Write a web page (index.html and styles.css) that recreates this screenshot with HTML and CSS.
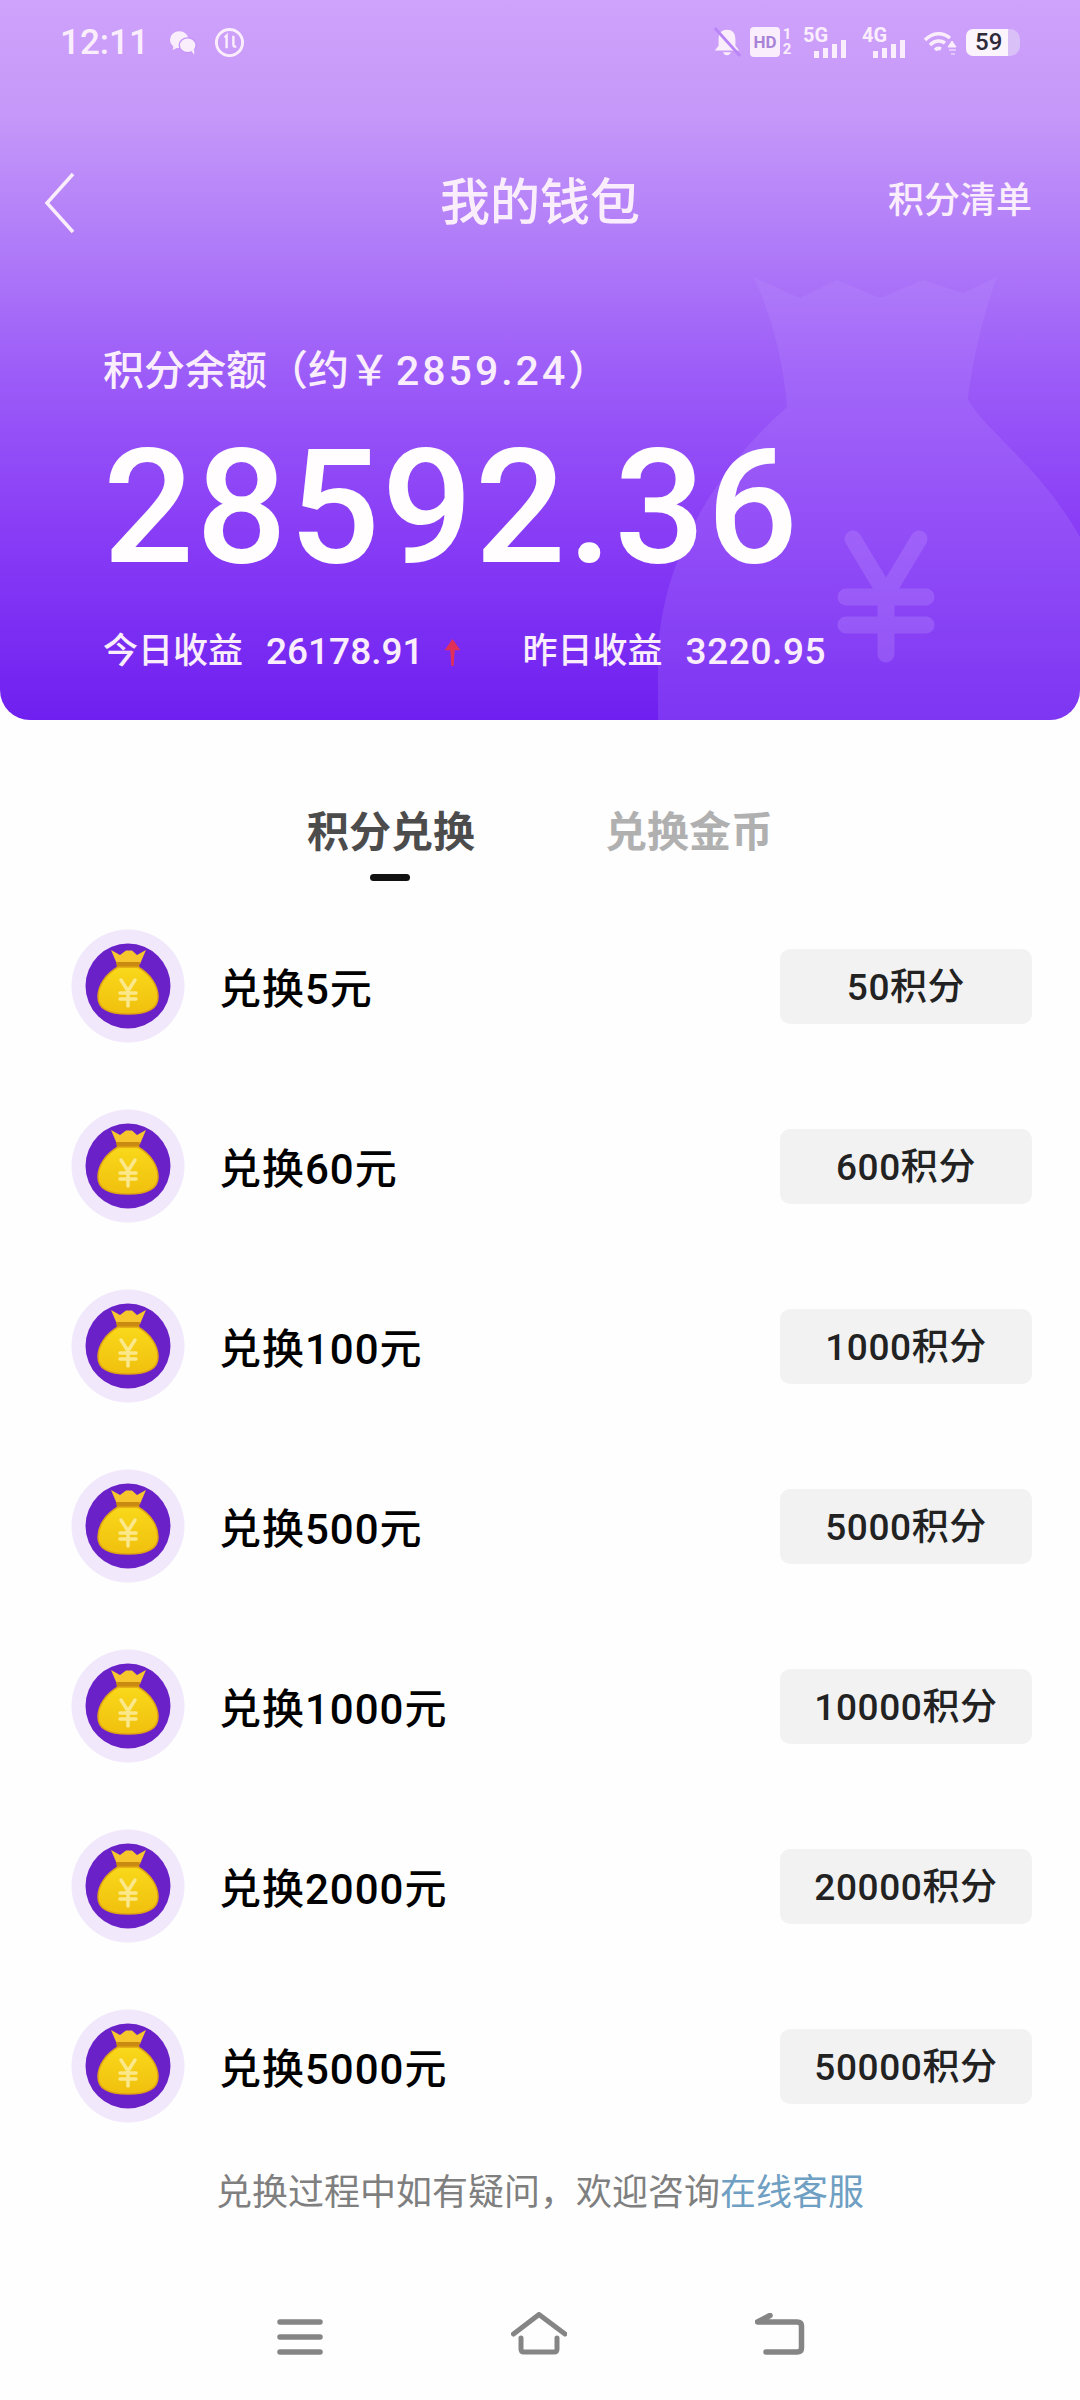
FILE: index.html
```html
<!DOCTYPE html>
<html lang="zh-CN">
<head>
<meta charset="utf-8">
<title>我的钱包</title>
<link rel="stylesheet" href="styles.css">
</head>
<body>
<svg class="defs" width="0" height="0">
  <defs>
    <linearGradient id="goldFill" x1="0" y1="0" x2="0" y2="1">
      <stop offset="0" stop-color="#f9d81a"/>
      <stop offset="1" stop-color="#f0c00e"/>
    </linearGradient>
    <symbol id="coinBag" viewBox="0 0 116 116">
      <circle cx="58" cy="58" r="56.5" fill="#f1e8fb"/>
      <circle cx="58" cy="58" r="42.5" fill="#6a22c8"/>
      <path d="M41 22 L50 27 L56 22.500 L62 22.500 L67 27 L76 22 L70 36 L47 36 Z" fill="#f7c52c"/>
      <path d="M46 34 H70 L69 40 H47 Z" fill="#c98a12"/>
      <path d="M48 39 H68 C80 46 88 57 88 69 C88 81 78 86 58 86 C38 86 28 81 28 69 C28 57 36 46 48 39 Z" fill="url(#goldFill)" stroke="#dfa214" stroke-width="1.500"/>
      <path d="M51 52 L58 63 L65 52 M50 65 H66 M50 71 H66 M58 63 V78" fill="none" stroke="#fbe88a" stroke-width="3.500" stroke-linecap="round"/>
    </symbol>
  </defs>
</svg>
<main class="page">
  <header class="hero">
    <svg class="watermark" viewBox="0 0 428 458" width="428" height="458" aria-hidden="true">
      <path d="M6 458 L6 390 C10 310 50 220 135 145 C133 110 120 50 101 15 L148 36 L185 18 L228 36 L271 18 L311 31 L345 15 C332 50 320 100 316 138 C340 175 388 205 428 275 L428 458 Z" fill="#c49bff" fill-opacity=".18"/>
      <path d="M201 277 L234 332 L267 277 M194 335 H274 M194 363 H274 M234 332 V392" fill="none" stroke="#c9a3ff" stroke-opacity=".24" stroke-width="17" stroke-linecap="round" stroke-linejoin="round"/>
    </svg>

    <div class="status">
      <div class="status-left">
        <span class="clock">12:11</span>
        <svg class="st-wechat" viewBox="0 0 30 26" width="28" height="25"><ellipse cx="11" cy="10" rx="10" ry="9" fill="#fbeefc"/><path d="M5 16 L4 21 L10 18 Z" fill="#fbeefc"/><ellipse cx="20" cy="16" rx="9" ry="8" fill="#fbeefc" stroke="#c596f8" stroke-width="1.500"/><path d="M24 22 L27 26 L27 20 Z" fill="#fbeefc"/></svg>
        <svg class="st-coin" viewBox="0 0 32 32" width="31" height="31"><circle cx="16" cy="16" r="13.500" fill="none" stroke="#fbeefc" stroke-width="3"/><path d="M11 11 L13 9 V22 M20 9 V18 Q20 21 23 20" fill="none" stroke="#fbeefc" stroke-width="2.500"/></svg>
      </div>
      <div class="status-right">
        <svg class="st-bell" viewBox="0 0 30 32" width="30" height="30"><path d="M15 3 C8 3 6 8 6 14 V20 L2 25 H28 L24 20 V14 C24 8 22 3 15 3 Z M11 27 H19 C19 31 11 31 11 27 Z" fill="#fbeefc"/><path d="M2 1 L29 31" stroke="#b985f7" stroke-width="3"/></svg>
        <span class="hd">HD</span>
        <span class="sim"><span>1</span><span>2</span></span>
        <span class="signal">
          <span class="net">5G</span>
          <svg class="bars" viewBox="0 0 36 18" width="36" height="18"><rect x="1" y="11" width="5" height="7" fill="#fbeefc"/><rect x="10" y="8" width="5" height="10" fill="#fbeefc"/><rect x="19" y="4" width="5" height="14" fill="#fbeefc"/><rect x="28" y="0" width="5" height="18" fill="#fbeefc"/></svg>
        </span>
        <span class="signal">
          <span class="net">4G</span>
          <svg class="bars" viewBox="0 0 36 18" width="36" height="18"><rect x="1" y="11" width="5" height="7" fill="#fbeefc"/><rect x="10" y="8" width="5" height="10" fill="#fbeefc"/><rect x="19" y="4" width="5" height="14" fill="#fbeefc"/><rect x="28" y="0" width="5" height="18" fill="#fbeefc"/></svg>
        </span>
        <svg class="st-wifi" viewBox="0 0 34 24" width="36" height="24"><path d="M2 9 C10 1 20 1 27 7 M7 14 C12 9 18 9 22 12 M12 19 C14 17 16 17 18 18" fill="none" stroke="#fbeefc" stroke-width="3.500"/><path d="M29 10 L33 16 H25 Z M26 19 H33 M28 23 H32" fill="#fbeefc" stroke="#fbeefc"/></svg>
        <span class="battery">59</span>
      </div>
    </div>

    <nav class="topbar">
      <svg class="back" viewBox="0 0 32 62" width="32" height="62"><path d="M29 2 L3 31 L29 60" fill="none" stroke="#fbeefc" stroke-width="3.500"/></svg>
      <h1 class="title">我的钱包</h1>
      <span class="topbar-link">积分清单</span>
    </nav>

    <section class="balance">
      <p class="balance-label">积分余额（约￥<span class="balance-approx">2859.24</span>）</p>
      <p class="balance-value">28592.36</p>
      <div class="earnings">
        <span class="earn-item">今日收益<b class="earn-num">26178.91</b><svg class="up" viewBox="0 0 14 24" width="17" height="27"><path d="M7 0 L14 10 H9 L8 24 H6 L5 10 H0 Z" fill="#e0305a"/></svg></span>
        <span class="earn-item">昨日收益<b class="earn-num earn-num-wide">3220.95</b></span>
      </div>
    </section>
  </header>

  <div class="tabs">
    <div class="tab tab-active">积分兑换</div>
    <div class="tab">兑换金币</div>
  </div>

  <ul class="list">
    <li class="row"><svg class="coin" width="116" height="116"><use href="#coinBag"/></svg><span class="row-label">兑换5元</span><span class="row-btn">50积分</span></li>
    <li class="row"><svg class="coin" width="116" height="116"><use href="#coinBag"/></svg><span class="row-label">兑换60元</span><span class="row-btn">600积分</span></li>
    <li class="row"><svg class="coin" width="116" height="116"><use href="#coinBag"/></svg><span class="row-label">兑换100元</span><span class="row-btn">1000积分</span></li>
    <li class="row"><svg class="coin" width="116" height="116"><use href="#coinBag"/></svg><span class="row-label">兑换500元</span><span class="row-btn">5000积分</span></li>
    <li class="row"><svg class="coin" width="116" height="116"><use href="#coinBag"/></svg><span class="row-label">兑换1000元</span><span class="row-btn">10000积分</span></li>
    <li class="row"><svg class="coin" width="116" height="116"><use href="#coinBag"/></svg><span class="row-label">兑换2000元</span><span class="row-btn">20000积分</span></li>
    <li class="row"><svg class="coin" width="116" height="116"><use href="#coinBag"/></svg><span class="row-label">兑换5000元</span><span class="row-btn">50000积分</span></li>
  </ul>

  <p class="help">兑换过程中如有疑问，欢迎咨询<a class="help-link">在线客服</a></p>

  <footer class="navbar">
    <svg viewBox="0 0 46 36" width="46" height="36"><path d="M3 3 H43 M3 18 H43 M3 33 H43" fill="none" stroke="#858585" stroke-width="5.500" stroke-linecap="round"/></svg>
    <svg viewBox="0 0 56 43" width="56" height="43"><path d="M2.500 22 L28 2.500 L54 22 M10 26 V37 Q10 40 13 40 H43 Q46 40 46 37 V26" fill="none" stroke="#858585" stroke-width="5" stroke-linecap="round" stroke-linejoin="round"/></svg>
    <svg viewBox="0 0 50 42" width="50" height="42"><path d="M15 2.500 L2.500 9 H42 Q46.500 9 46.500 13 V35 Q46.500 39 42 39 H11" fill="none" stroke="#858585" stroke-width="5.500" stroke-linecap="round" stroke-linejoin="round"/></svg>
  </footer>
</main>
</body>
</html>
```
FILE: styles.css
```css
* { box-sizing: border-box; }
html, body { margin: 0; padding: 0; }
body {
  background: #fefefe;
  color: #111;
  font-family: "Roboto", "Noto Sans CJK SC", sans-serif;
}
.defs { position: absolute; }
.page { width: 1080px; height: 2400px; overflow: hidden; }

.hero {
  position: relative;
  height: 720px;
  overflow: hidden;
  border-radius: 0 0 30px 30px;
  background: linear-gradient(180deg, #cfa2fb 0%, #c598f9 16%, #ae78f8 36%, #9c5cf8 52%, #8a3ff6 72%, #6f20f0 100%);
  color: #fbeefc;
}
.watermark { position: absolute; left: 652px; top: 262px; }

.status {
  position: relative;
  display: flex;
  justify-content: space-between;
  align-items: center;
  height: 82px;
  padding: 2px 60px 0 60px;
}
.status-left, .status-right { display: flex; align-items: center; }
.clock { font-size: 35px; font-weight: 500; margin-right: 20px; }
.st-coin { margin-left: 17px; }
.st-bell { margin-right: 8px; }
.hd {
  width: 30px; height: 30px;
  border-radius: 4px;
  background: #fbeefc;
  color: #a883d8;
  font-size: 17px; font-weight: 700;
  line-height: 30px;
  text-align: center;
}
.sim {
  display: flex; flex-direction: column;
  width: 12px; margin: 0 10px 0 1px;
  font-size: 15px; font-weight: 700; line-height: 15px;
  text-align: center;
}
.signal { display: flex; flex-direction: column; width: 45px; margin-right: 14px; height: 32px; position: relative; }
.net { font-size: 20px; font-weight: 700; line-height: 18px; }
.bars { position: absolute; left: 10px; bottom: 0; }
.st-wifi { margin: 2px 8px 0 1px; }
.battery {
  width: 54px; height: 27px;
  border-radius: 7px 10px 10px 7px;
  background: linear-gradient(90deg, #fbf4fd 78%, #d9c0f7 78%);
  color: #2e2a3a;
  font-size: 24px; font-weight: 500;
  line-height: 27px;
  padding-left: 9px;
}

.topbar {
  position: relative;
  display: flex;
  align-items: center;
  justify-content: space-between;
  height: 74px;
  margin-top: 84px;
  padding: 0 48px 0 44px;
}
.title {
  margin: 0;
  position: absolute; left: 0; right: 0;
  text-align: center;
  font-size: 50px; font-weight: 500; line-height: 74px;
}
.topbar-link { font-size: 36px; font-weight: 500; position: relative; top: -6px; }

.balance { position: relative; padding: 0 0 0 103px; }
.balance-label {
  margin: 0;
  padding-top: 103px;
  font-size: 41px; line-height: 56px; font-weight: 500;
  white-space: nowrap;
}
.balance-approx { margin-left: 6px; letter-spacing: 3px; }
.balance-value {
  margin: 0;
  padding-top: 19px;
  color: #fffdfd;
  font-family: "Roboto", sans-serif;
  font-size: 160px; line-height: 180px; font-weight: 500;
  letter-spacing: 2px;
}
.earnings { display: flex; gap: 62px; margin-top: 29px; font-size: 35px; line-height: 50px; font-weight: 500; }
.earn-item { display: flex; align-items: center; }
.earn-num { font-weight: 500; margin-left: 23px; font-size: 37px; }
.earn-num-wide { letter-spacing: .6px; }
.up { margin-left: 20px; }

.tabs { display: flex; height: 176px; padding: 88px 0 0 307px; gap: 130px; }
.tab { position: relative; font-size: 42px; line-height: 50px; font-weight: 700; color: #b0b0b0; }
.tab-active { color: #4c4c4c; }
.tab-active::after {
  content: "";
  position: absolute;
  left: 63px; top: 66px;
  width: 40px; height: 7px;
  border-radius: 4px;
  background: #111;
}

.list { margin: 0; padding: 0; list-style: none; }
.row { display: flex; align-items: center; height: 180px; padding: 0 48px 0 70px; }
.coin { flex: none; }
.row-label { flex: 1; margin: 0 0 2px 33px; font-size: 42px; font-weight: 500; color: #000; letter-spacing: 1px; }
.row-btn {
  width: 252px; height: 75px;
  border-radius: 10px;
  background: #f2f2f2;
  color: #222;
  font-size: 37px; font-weight: 500;
  line-height: 78px;
  letter-spacing: .6px;
  text-align: center;
}

.help {
  margin: 0;
  padding-top: 10px;
  height: 156px;
  text-align: center;
  font-size: 36px; line-height: 54px; font-weight: 400;
  color: #7f7f7f;
}
.help-link { color: #6f9fc2; }

.navbar { display: flex; justify-content: space-between; align-items: flex-end; height: 43px; padding: 0 275px 0 277px; }
```
